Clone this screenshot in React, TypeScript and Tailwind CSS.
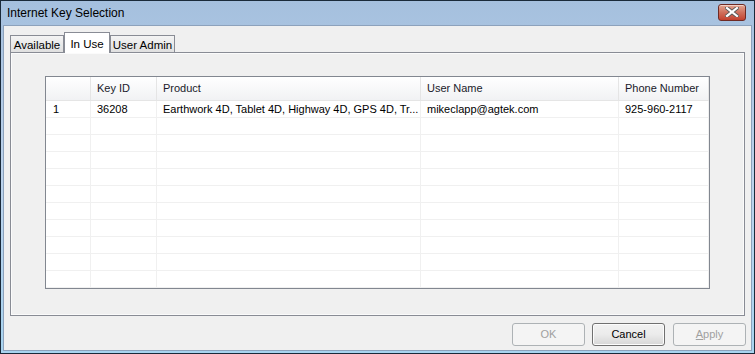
const font = { fontFamily: '"Liberation Sans", Arial, sans-serif' };

const columns = ['', 'Key ID', 'Product', 'User Name', 'Phone Number'];
const firstRow = [
  '1',
  '36208',
  'Earthwork 4D, Tablet 4D, Highway 4D, GPS 4D, Tr...',
  'mikeclapp@agtek.com',
  '925-960-2117',
];

function CloseButton() {
  return (
    <div className="w-[28px] h-[17px] rounded-[3px] border border-[#6e2a24] bg-gradient-to-b from-[#e3a592] via-[#cf6f5c] to-[#c2402f] flex items-center justify-center shadow-[inset_0_1px_0_rgba(255,255,255,0.5)]">
      <svg width="14" height="10" viewBox="0 0 14 10">
        <path d="M2 1 L12 9 M12 1 L2 9" stroke="#5a5a5a" strokeWidth="4" strokeLinecap="square" />
        <path d="M2 1 L12 9 M12 1 L2 9" stroke="#ffffff" strokeWidth="2.2" strokeLinecap="square" />
      </svg>
    </div>
  );
}

function Tab({ label, width, active }: { label: string; width: string; active?: boolean }) {
  if (active) {
    return (
      <div className={`${width} relative z-10 -mb-px h-[21px] pt-[3px] bg-white border border-b-0 border-[#898c95] text-[11.5px] text-black text-center whitespace-nowrap`}>
        {label}
      </div>
    );
  }
  return (
    <div className={`${width} h-[17px] pt-[2px] bg-gradient-to-b from-[#f4f4f4] to-[#e0e0e0] border border-[#898c95] border-b-0 text-[11.5px] text-black text-center leading-[14px] whitespace-nowrap`}>
      {label}
    </div>
  );
}

function Button({ label, disabled, underline }: { label: string; disabled?: boolean; underline?: boolean }) {
  const text = underline ? (
    <span>
      <span className="underline">{label[0]}</span>
      {label.slice(1)}
    </span>
  ) : (
    label
  );
  if (disabled) {
    return (
      <div className="w-[73px] h-[23px] rounded-[3px] border border-[#adb2b5] bg-[#f4f4f4] flex items-center justify-center text-[11px] text-[#a0a0a0]">
        {text}
      </div>
    );
  }
  return (
    <div className="w-[73px] h-[23px] rounded-[3px] border border-[#707070] bg-gradient-to-b from-[#f2f2f2] via-[#ebebeb] to-[#d6d6d6] flex items-center justify-center text-[11px] text-black shadow-[inset_0_0_0_1px_#fcfcfc]">
      {text}
    </div>
  );
}

function Grid() {
  const cols = 'grid grid-cols-[45px_66px_264px_198px_90px]';
  const empty = Array.from({ length: 10 });
  return (
    <div className="w-[665px] h-[213px] border border-[#828790] bg-white overflow-hidden text-[11px]">
      <div className={`${cols} h-[24px] bg-gradient-to-b from-[#ffffff] to-[#f1f2f4] border-b border-[#e5e5e5]`}>
        {columns.map((c, i) => (
          <div key={i} className="flex items-center pl-[6px] border-r border-[#e5e5e5] text-[#1a1a2a] whitespace-nowrap">
            {c}
          </div>
        ))}
      </div>
      <div className={`${cols} h-[17px] border-b border-[#f0f0f0]`}>
        {firstRow.map((c, i) => (
          <div key={i} className={`flex items-center border-r border-[#f0f0f0] text-black whitespace-nowrap overflow-hidden ${i === 0 ? 'pl-[7px]' : 'pl-[6px]'}`}>
            {c}
          </div>
        ))}
      </div>
      {empty.map((_, r) => (
        <div key={r} className={`${cols} h-[17px] border-b border-[#f0f0f0]`}>
          {columns.map((_, i) => (
            <div key={i} className="border-r border-[#f0f0f0]" />
          ))}
        </div>
      ))}
    </div>
  );
}

export default function App() {
  return (
    <div style={font} className="w-[755px] h-[354px] bg-[#1a2a3a] p-px">
      <div className="w-full h-full flex flex-col bg-gradient-to-b from-[#a5c0de] via-[#bcd3ec] to-[#a8d4f0]">
        <div className="h-[24px] flex items-center justify-between pl-[6px] pr-[8px] shrink-0">
          <span className="text-[12px] text-black">Internet Key Selection</span>
          <div className="-mt-[2px]">
            <CloseButton />
          </div>
        </div>
        <div className="flex-1 mx-[2px] mb-[2px] border border-[#8da2bc] bg-[#f0f0f0] flex flex-col">
          <div className="pl-[6px] pr-[6px] pt-[6px]">
            <div className="flex items-end h-[20px]">
              <Tab label="Available" width="w-[54px]" />
              <Tab label="In Use" width="w-[46px]" active />
              <Tab label="User Admin" width="w-[65px]" />
            </div>
            <div className="w-[735px] h-[264px] border border-[#898c95] bg-[#f0f0f0] shadow-[inset_0_0_0_1px_#fbfbfb] pt-[23px] pl-[34px]">
              <Grid />
            </div>
          </div>
          <div className="flex justify-end gap-[7px] pr-[5px] pt-[7px]">
            <Button label="OK" disabled />
            <div className="mr-[1px]">
              <Button label="Cancel" />
            </div>
            <Button label="Apply" disabled underline />
          </div>
        </div>
      </div>
    </div>
  );
}
